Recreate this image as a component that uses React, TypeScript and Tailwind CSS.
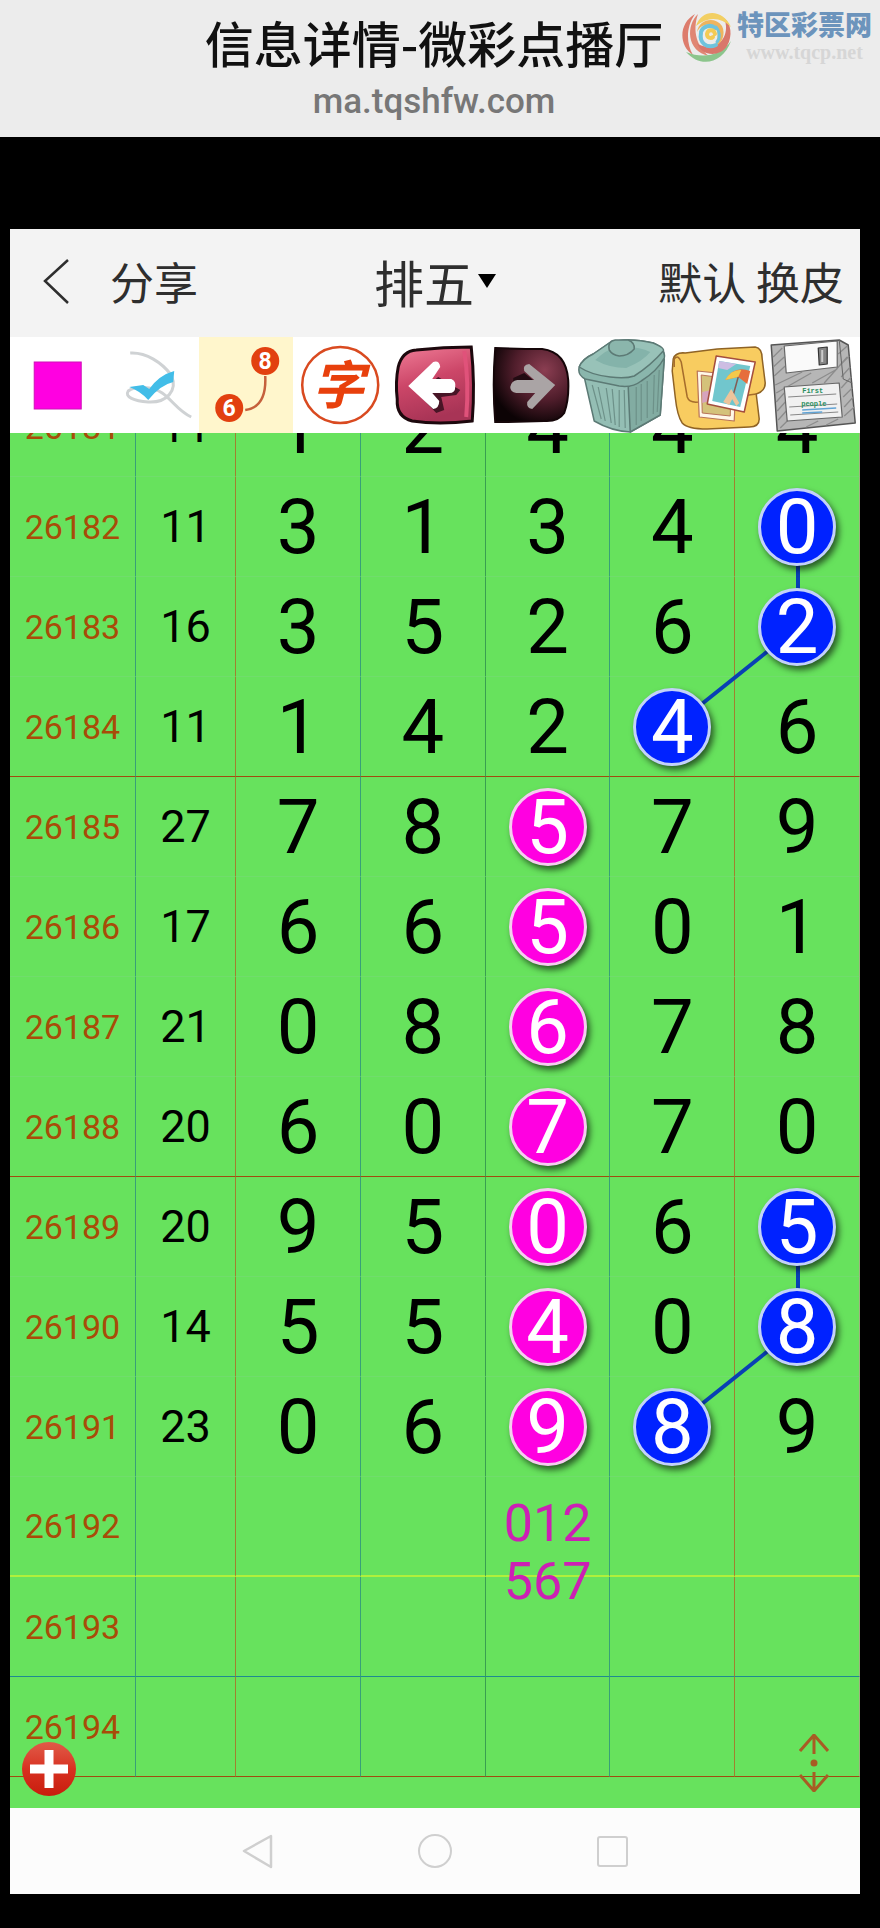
import React from "react";

type Tone = "pink" | "blue";
type Cell = { n: string; tone?: Tone };
type Line = "faint" | "brown" | "yellow" | "blue";
type Row = { id: string; sum: string; cells: Cell[]; line: Line; note?: string[] };

const row = (id: string, sum: string, digits: string, tones = "-----", line: Line = "faint"): Row => ({
  id,
  sum,
  line,
  cells: Array.from({ length: 5 }, (_, i) => ({
    n: digits[i] ?? "",
    tone: tones[i] === "p" ? "pink" : tones[i] === "b" ? "blue" : undefined,
  })),
});

const rows: Row[] = [
  row("26181", "11", "12444"),
  row("26182", "11", "31340", "----b"),
  row("26183", "16", "35262", "----b"),
  row("26184", "11", "14246", "---b-", "brown"),
  row("26185", "27", "78579", "--p--"),
  row("26186", "17", "66501", "--p--"),
  row("26187", "21", "08678", "--p--"),
  row("26188", "20", "60770", "--p--", "brown"),
  row("26189", "20", "95065", "--p-b"),
  row("26190", "14", "55408", "--p-b"),
  row("26191", "23", "06989", "--pb-"),
  { ...row("26192", "", "", "-----", "yellow"), note: ["012", "567"] },
  row("26193", "", "", "-----", "blue"),
  row("26194", "", "", "-----", "brown"),
];

const lineClass: Record<Line, string> = {
  faint: "border-b border-b-[#70dd6c]",
  brown: "border-b border-b-[#a04c10]",
  yellow: "border-b-2 border-b-[#b0f03c]",
  blue: "border-b border-b-[#1f8a90]",
};

const numberColumns = [
  "border-r-[#38a078]",
  "border-r-[#38a050]",
  "border-r-[#38a078]",
  "border-r-[#a08030]",
  "border-r-[#a0b080]",
];

const toneClass: Record<Tone, string> = {
  pink: "bg-[#ff00e1] border-[#f5cdf0]",
  blue: "bg-[#0022ff] border-[#c3d2f8]",
};

function Ball({ n, tone }: { n: string; tone: Tone }) {
  return (
    <span
      className={`relative z-20 mx-auto flex size-[78px] items-center justify-center rounded-full border-[3px] text-white shadow-[3px_4px_6px_rgba(0,0,0,0.6)] ${toneClass[tone]}`}
    >
      {n}
    </span>
  );
}

function Swirl() {
  return (
    <svg viewBox="0 0 52 54" className="h-[54px] w-[52px] shrink-0" fill="none" strokeLinecap="round">
      <path d="M14 5C-2 14-3 36 12 46C5 34 5 18 14 5Z" fill="#dd7c6c" />
      <path d="M17 5C5 16 5 42 28 47C16 38 11 22 17 5Z" fill="#e08673" />
      <path d="M5 43C20 60 42 54 50 32C39 47 22 50 5 43Z" fill="#8cc58c" />
      <path d="M16 34C20 47 38 49 46 37C52 27 50 14 43 9C49 23 41 36 31 37C24 38 19 37 16 34Z" fill="#d9776b" />
      <path d="M15 17C21-1 42 0 50 18C40 8 27 7 15 17Z" fill="#f2cf62" />
      <path d="M16 23C18 10 34 7 41 17C45 25 41 35 34 37C39 27 37 17 29 16C24 15 19 17 16 23Z" fill="#eeb45e" />
      <path d="M20 23C22 17 30 15 34 19M20 24C18 34 26 40 35 36" stroke="#6fc3dc" strokeWidth="4" />
      <path d="M34 25C33 20 27 20 26 25C26 29 30 30 32 28" stroke="#f3cb55" strokeWidth="4" />
      <path d="M36 33C40 28 38 21 35 18" stroke="#6fc3dc" strokeWidth="3" />
    </svg>
  );
}

function CheckIcon() {
  return (
    <>
      <path
        d="M26 16C42 15 58 26 67 38C74 54 62 66 44 65C30 64 20 60 24 54C30 49 48 49 58 56C68 63 74 74 87 80"
        fill="none"
        stroke="#cfd2d4"
        strokeWidth="3"
      />
      <path d="M25 50L39 48L45 52Q55 38 70 34L69 45Q56 48 44 63Q36 54 25 50Z" fill="#42bde8" />
    </>
  );
}

function LinkIcon() {
  return (
    <>
      <path d="M66 39C67 58 61 71 46 73" fill="none" stroke="#c5603c" strokeWidth="2.5" />
      <g fill="#e2400f">
        <circle cx="66" cy="24" r="14" />
        <circle cx="30" cy="71" r="14" />
      </g>
      <g fill="#fff" fontFamily="Roboto, sans-serif" fontWeight="700" fontSize="23" textAnchor="middle">
        <text x="66" y="32">8</text>
        <text x="30" y="79">6</text>
      </g>
    </>
  );
}

function TextIcon() {
  return (
    <>
      <circle cx="47" cy="48" r="38" fill="none" stroke="#d94a20" strokeWidth="2.5" />
      <text
        x="45"
        y="67"
        textAnchor="middle"
        fontSize="52"
        fontStyle="italic"
        fontWeight="700"
        fill="#e8400c"
        fontFamily="'Noto Sans CJK SC', sans-serif"
      >
        字
      </text>
    </>
  );
}

function UndoIcon() {
  return (
    <>
      <defs>
        <linearGradient id="undo" x1="0" y1="0" x2="0.3" y2="1">
          <stop offset="0" stopColor="#f07d97" />
          <stop offset="0.5" stopColor="#cc4668" />
          <stop offset="1" stopColor="#a83456" />
        </linearGradient>
      </defs>
      <path d="M28 13Q55 10 83 10Q87 48 84 84Q50 88 24 84Q8 80 9 62Q7 45 10 30Q14 14 28 13Z" fill="url(#undo)" stroke="#1c080d" strokeWidth="3" />
      <path d="M76 14Q81 45 78 80" fill="none" stroke="#e0527a" strokeWidth="4" />
      <path d="M29 56L48 76L56 73L53 60L68 58L72 53L50 40Z" fill="#481526" />
      <path d="M20 49L45 25Q51 23 52 30L44 42H63Q68 44 67 50Q67 56 61 56H44L51 64Q51 71 45 72Z" fill="#fff" />
    </>
  );
}

function RedoIcon() {
  return (
    <>
      <defs>
        <radialGradient id="redo" cx="0.68" cy="0.3" r="0.75">
          <stop offset="0" stopColor="#8b3e52" />
          <stop offset="0.55" stopColor="#4f1d2b" />
          <stop offset="1" stopColor="#0c0305" />
        </radialGradient>
      </defs>
      <path d="M13 11Q38 12 60 12Q84 15 86 43Q87 62 82 76Q76 85 62 84Q38 85 13 85Q10 48 13 11Z" fill="url(#redo)" stroke="#150609" strokeWidth="2" />
      <path d="M31 41L42 36L52 44L46 53L31 50Z" fill="#220b12" />
      <path d="M73 48L50 72Q44 71 45 65L53 56H34Q28 55 28 50Q29 44 35 43H52L42 34Q40 28 47 27Z" fill="#aaa4a5" />
    </>
  );
}

function TrashIcon() {
  return (
    <g stroke="#5c7a75" strokeWidth="1.5" strokeLinejoin="round">
      <path d="M7 40L17 84Q34 94 53 95L83 78L87 22L50 48Z" fill="#94beb4" />
      <path d="M51 50L53 95L83 78L87 22Z" fill="#82aca2" />
      <path d="M2 30Q5 22 16 17L32 6Q50 0 76 6Q89 12 87 21Q80 34 64 44Q55 51 42 49L8 42Q0 38 2 30Z" fill="#8ab6ac" />
      <path d="M2 30Q5 22 16 17L32 6Q50 0 76 6Q88 11 86 14Q74 28 57 39Q48 42 33 40Q14 38 2 30Z" fill="#98c2b8" />
      <path d="M18 23Q30 12 38 11Q58 8 73 15Q66 24 49 31Q32 31 18 23Z" fill="#84b3aa" stroke="none" />
      <path d="M32 13Q30 4 38 3H51Q58 6 57 12Q51 19 42 19Q35 18 32 13Z" fill="#8bb6ac" />
      <path
        d="M15 48L24 82M21 50L28 84M29 51L34 86M35 52L38 88M42 53V90M47 53L48 91M59 50V88M64 47V84M70 44V81M77 38L76 77M82 33L80 75"
        fill="none"
        stroke="#6d9189"
        strokeWidth="1.2"
      />
    </g>
  );
}

function GalleryIcon() {
  return (
    <g strokeLinejoin="round">
      <path d="M2 22Q4 15 14 16L46 12L84 10Q91 11 91 22L94 46Q94 54 85 57L88 82Q88 90 78 90L36 92Q16 92 11 86Q6 79 4 60L1 34Z" fill="#f8cc60" stroke="#8f6325" strokeWidth="1.5" />
      <path d="M3 30V22Q7 17 10 25L16 60Q18 66 27 65L85 57" fill="none" stroke="#a66d2c" strokeWidth="1.5" />
      <path d="M26 34L65 38L63 84L28 80Z" fill="#fff8e8" stroke="#b87358" strokeWidth="1.2" />
      <path d="M30 38L60 42L59 79L31 76Z" fill="#d4c27a" stroke="#b87358" />
      <path d="M31 55L59 49V58L31 66Z" fill="#d6a3bd" />
      <path d="M45 19L84 25L73 75L36 67Z" fill="#fff" stroke="#a44e3e" strokeWidth="1.5" />
      <path d="M48 24L79 29L69 70L41 64Z" fill="#71c6cd" />
      <path d="M48 24L65 27L56 33L47 31Z" fill="#cdbde3" />
      <path d="M54 43Q63 28 79 34L76 47L67 40Z" fill="#e66d3c" />
      <path d="M54 43Q60 32 70 33L67 40Z" fill="#f4c94c" />
      <path d="M67 40L62 58" stroke="#825c55" strokeWidth="1.5" />
      <path d="M52 65L60 52L68 66L65 69L61 62L58 68Z" fill="#edc49b" />
    </g>
  );
}

function FloppyIcon() {
  return (
    <g strokeLinejoin="round">
      <path d="M5 8L73 3L82 8L89 86L11 94Z" fill="#b6b6b6" stroke="#555" strokeWidth="1.5" />
      <path
        d="M7 20L16 11M7 30L18 20M8 39L19 29M9 48L36 35M10 56L45 36M10 65L18 56M11 74L19 65M12 83L20 74M14 91L22 83M46 46L71 32M58 46L81 20M72 17L81 9M73 29L83 19M75 40L84 30M75 51L85 40M77 60L86 51M78 70L87 60M78 79L88 70M40 90L52 84M60 88L72 82"
        stroke="#8c8c8c"
        strokeWidth="1.3"
      />
      <path d="M73 3L77 42L86 46" fill="none" stroke="#666" />
      <path d="M18 9L71 4V30L20 36Z" fill="#fafafa" stroke="#666" strokeWidth="1.2" />
      <path d="M52 11L61 10V27L53 28Z" fill="#858585" stroke="#333" strokeWidth="1.2" />
      <path d="M56 13V25" stroke="#ccc" strokeWidth="2" />
      <path d="M18 50L73 46L76 80L21 84Z" fill="#f1f1f1" stroke="#666" strokeWidth="1.2" />
      <path d="M22 60L70 57M23 70L71 67M24 78L72 75" stroke="#888" />
      <g fill="#2a8f60" fontFamily="'Liberation Mono', monospace" fontWeight="700" fontSize="7">
        <text x="36" y="56">First</text>
        <text x="35" y="69">people</text>
      </g>
      <path d="M36 73L70 71M36 76L56 75" stroke="#62a4d5" strokeWidth="1.3" />
    </g>
  );
}

const tools: { label: string; icon: React.ReactNode; active?: boolean }[] = [
  { label: "颜色", icon: <rect x="24" y="25" width="47" height="47" fill="#ff00e1" stroke="#d010b8" /> },
  { label: "选择", icon: <CheckIcon /> },
  { label: "连线", icon: <LinkIcon />, active: true },
  { label: "文字", icon: <TextIcon /> },
  { label: "撤销", icon: <UndoIcon /> },
  { label: "重做", icon: <RedoIcon /> },
  { label: "删除", icon: <TrashIcon /> },
  { label: "图库", icon: <GalleryIcon /> },
  { label: "保存", icon: <FloppyIcon /> },
];

function PageHeader() {
  return (
    <header className="relative flex h-[137px] flex-col items-center bg-[#ececec] pt-3.5 pr-3">
      <h1 className="text-[49px] leading-[56px] font-medium text-[#111]">信息详情-微彩点播厅</h1>
      <p className="mt-2.5 font-[Roboto,sans-serif] text-[35px] leading-[44px] font-medium text-[#777]">ma.tqshfw.com</p>
      <div className="absolute top-2 right-2 flex items-center gap-1">
        <Swirl />
        <div className="flex flex-col items-center">
          <span className="text-[27px] leading-[32px] font-black text-[#6c94bc]">特区彩票网</span>
          <span className="font-['Liberation_Serif',serif] text-[20px] leading-[24px] font-bold text-[#d6d6d6]">
            www.tqcp.net
          </span>
        </div>
      </div>
    </header>
  );
}

function AppBar() {
  return (
    <nav className="grid h-[108px] grid-cols-[1fr_auto_1fr] items-center bg-[#f3f3f3] px-4 pb-1 text-[44px] leading-none text-[#2e2e2e]">
      <div className="flex items-center gap-10 pl-4">
        <button type="button" aria-label="返回">
          <svg viewBox="0 0 28 48" className="h-12 w-7" fill="none" stroke="#2e2e2e" strokeWidth="2.5">
            <path d="M26 3L3 24L26 46" />
          </svg>
        </button>
        <button type="button">分享</button>
      </div>
      <div className="flex items-center gap-1">
        <select
          aria-label="彩种"
          className="h-[72px] w-[100px] appearance-none bg-transparent text-[50px] leading-[72px]"
        >
          <option>排五</option>
        </select>
        <svg viewBox="0 0 18 14" className="h-[14px] w-[18px]">
          <path d="M0 0H18L9 14Z" fill="#000" />
        </svg>
      </div>
      <div className="flex justify-end">
        <button type="button">默认</button>
        <span className="whitespace-pre"> </span>
        <button type="button">换皮</button>
      </div>
    </nav>
  );
}

function Toolbar() {
  return (
    <div className="grid h-24 grid-cols-9 bg-white">
      {tools.map((t) => (
        <button key={t.label} type="button" aria-label={t.label} className={t.active ? "bg-[#fff6cc]" : ""}>
          <svg viewBox="0 0 94 96" className="h-24 w-full">
            {t.icon}
          </svg>
        </button>
      ))}
    </div>
  );
}

function Chart() {
  return (
    <main className="relative overflow-hidden bg-[#67e25d] pb-[31px]">
      <div className="relative -mt-14">
        <svg
          viewBox="0 0 850 1400"
          preserveAspectRatio="none"
          className="absolute inset-0 z-10 h-full w-full"
          fill="none"
          stroke="#0940b4"
          strokeWidth="4"
        >
          <path d="M788 150V250L663 350M788 850V950L663 1050" />
        </svg>
        <table className="w-full table-fixed border-separate border-spacing-0 text-center font-[Roboto,sans-serif] leading-none">
          <colgroup>
            <col className="w-[14.8%]" />
            <col className="w-[11.8%]" />
            <col />
            <col />
            <col />
            <col />
            <col />
          </colgroup>
          <tbody>
            {rows.map((r) => (
              <tr key={r.id}>
                <th
                  scope="row"
                  className={`h-[100px] border-r border-r-[#38a078] p-0 text-[34px] font-normal text-[#a84c08] ${lineClass[r.line]}`}
                >
                  {r.id}
                </th>
                <td
                  className={`h-[100px] border-r border-r-[#a08030] p-0 text-[45px] text-black ${lineClass[r.line]}`}
                >
                  {r.sum}
                </td>
                {r.cells.map((c, i) => (
                  <td
                    key={i}
                    className={`relative h-[100px] border-r p-0 text-[76px] font-normal text-black ${numberColumns[i]} ${lineClass[r.line]}`}
                  >
                    {c.tone ? <Ball n={c.n} tone={c.tone} /> : c.n}
                    {i === 2 && r.note && (
                      <div className="absolute inset-x-0 top-[18px] z-20 text-[52px] leading-[58px] text-[#cc20b4]">
                        {r.note.map((n) => (
                          <div key={n}>{n}</div>
                        ))}
                      </div>
                    )}
                  </td>
                ))}
              </tr>
            ))}
          </tbody>
        </table>
      </div>
      <button
        type="button"
        aria-label="添加"
        className="absolute bottom-3 left-3 z-30 flex size-[54px] items-center justify-center rounded-full bg-linear-to-b from-[#e05a48] via-[#d83020] to-[#c81c0c]"
      >
        <svg viewBox="0 0 40 40" className="size-10">
          <path d="M20 1V39M1 20H39" stroke="#fff" strokeWidth="9" />
        </svg>
      </button>
      <button type="button" aria-label="滚动" className="absolute right-[31px] bottom-4 z-30">
        <svg viewBox="0 0 30 58" className="h-[58px] w-[30px]" fill="none" stroke="#a85c24" strokeWidth="3">
          <path d="M1 17L15 1L29 17M15 1V20M1 41L15 57L29 41M15 57V38" />
          <circle cx="15" cy="29" r="3.5" fill="#a85c24" stroke="none" />
        </svg>
      </button>
    </main>
  );
}

function SystemBar() {
  return (
    <footer className="flex h-[86px] items-center justify-center bg-[#fcfcfc]">
      <button type="button" aria-label="后退" className="flex w-[177px] justify-center">
        <svg viewBox="0 0 34 36" className="h-9 w-[34px]" fill="none" stroke="#cfcfcf" strokeWidth="2.5" strokeLinejoin="round">
          <path d="M3 18L30 3V34Z" />
        </svg>
      </button>
      <button type="button" aria-label="主页" className="flex w-[177px] justify-center">
        <span className="size-[34px] rounded-full border-2 border-[#cfcfcf]" />
      </button>
      <button type="button" aria-label="最近任务" className="flex w-[177px] justify-center">
        <span className="size-[31px] rounded-[3px] border-2 border-[#cfcfcf]" />
      </button>
    </footer>
  );
}

export default function App() {
  return (
    <div className="min-h-screen bg-black font-['Noto_Sans_CJK_SC',sans-serif]">
      <PageHeader />
      <div className="pt-[92px] pr-5 pb-[34px] pl-[10px]">
        <AppBar />
        <Toolbar />
        <Chart />
        <SystemBar />
      </div>
    </div>
  );
}
